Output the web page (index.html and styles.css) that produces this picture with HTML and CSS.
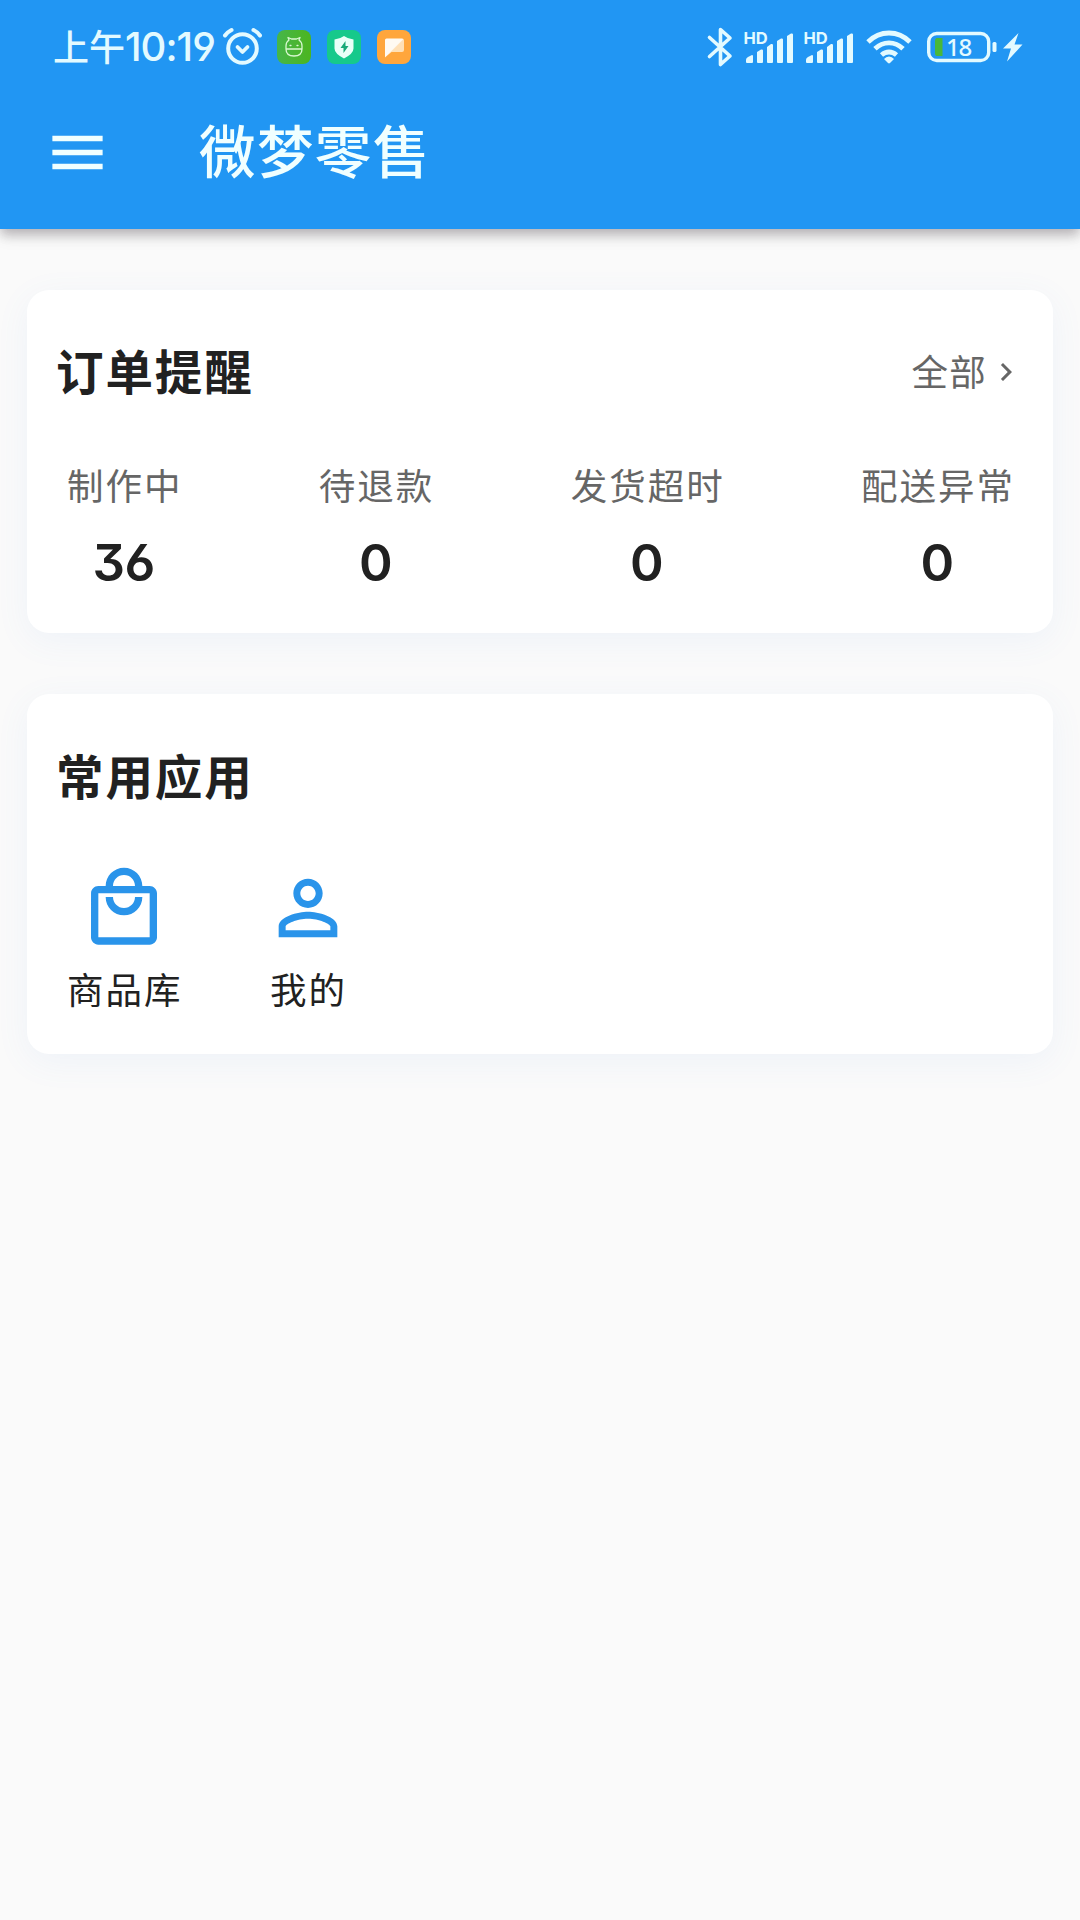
FILE: index.html
```html
<!DOCTYPE html>
<html lang="zh-CN">
<head>
<meta charset="utf-8">
<title>微梦零售</title>
<link rel="stylesheet" href="styles.css">
</head>
<body>
<header class="header">
  <div class="status">
    <div class="status-left">
      <span class="time"><span class="ampm">上午</span><span class="clock">10:19</span></span>
      <svg class="alarm" width="42" height="40" viewBox="0 0 42 40" fill="none" stroke="#e3faff" stroke-linecap="round" stroke-linejoin="round">
        <circle cx="20.500" cy="21.500" r="14.300" stroke-width="4"/>
        <path d="M15.500 20l5 5 5-5" stroke-width="3.800"/>
        <path d="M3 8.500Q5.500 5 9.500 3M31.500 3Q35.500 5 38 8.500" stroke-width="4"/>
      </svg>
      <svg class="app" width="34" height="34" viewBox="0 0 34 34">
        <defs><linearGradient id="green"><stop stop-color="#46b64a"/><stop offset="1" stop-color="#4cb51f"/></linearGradient></defs>
        <rect width="34" height="34" rx="8" fill="url(#green)"/>
        <path d="M9 19V16q0-4 3-6L11 7.500l3.500 1.500h5L23 7.500 22 10q3 2 3 6v3q0 7-8 7t-8-7zM9 19h16M13 15.500h1M20 15.500h1" fill="none" stroke="#d8f8d0" stroke-width="1.300" stroke-linecap="round" stroke-linejoin="round"/>
      </svg>
      <svg class="app" width="34" height="34" viewBox="0 0 34 34">
        <rect width="34" height="34" rx="8" fill="#16c98b"/>
        <path d="M17 6q4 3 9.500 3.500v9q0 5-9.500 10-9.500-5-9.500-10v-9Q13 9 17 6z" fill="#e9fff8"/>
        <path d="M18.500 11l-5 7h3v5l5-7h-3z" fill="#16a978"/>
      </svg>
      <svg class="app" width="34" height="34" viewBox="0 0 34 34">
        <defs><linearGradient id="note" x2="1" y2="1"><stop offset=".48" stop-color="#fffaf2"/><stop offset=".52" stop-color="#ffe0b6"/></linearGradient></defs>
        <rect width="34" height="34" rx="8" fill="#ffa63c"/>
        <path d="M9.500 8.500H25q2 0 2 2V20q0 2-2 2H14.500L8 27.500V10q0-1.500 1.500-1.500z" fill="url(#note)"/>
      </svg>
    </div>
    <div class="status-right">
      <svg class="bluetooth" width="26" height="40" viewBox="0 0 26 40" fill="none" stroke="#e3faff" stroke-width="3.600" stroke-linecap="round" stroke-linejoin="round">
        <path d="M2.500 10.500L23 29l-9.500 8.500v-35L23 11 2.500 29.500"/>
      </svg>
      <svg class="signal" width="52" height="36" viewBox="0 0 52 36" fill="#e3faff">
        <text class="hd" x="-.5" y="14.500">HD</text>
        <path d="M2 33v-2q0-2 2-3l4-2q1 0 1 1v6q0 1-1 1H3q-1 0-1-1zM13 33V23l4-2.500q2-.5 2 1V33q0 1-1 1h-4q-1 0-1-1zM23 33V18l4-3q2-.5 2 1v17q0 1-1 1h-4q-1 0-1-1zM33 33V12l4-2.500q2-.5 2 1V33q0 1-1 1h-4q-1 0-1-1zM43 33V7l4-2.500q2-.5 2 1V33q0 1-1 1h-4q-1 0-1-1z"/>
      </svg>
      <svg class="signal" width="52" height="36" viewBox="0 0 52 36" fill="#e3faff">
        <text class="hd" x="-.5" y="14.500">HD</text>
        <path d="M2 33v-2q0-2 2-3l4-2q1 0 1 1v6q0 1-1 1H3q-1 0-1-1zM13 33V23l4-2.500q2-.5 2 1V33q0 1-1 1h-4q-1 0-1-1zM23 33V18l4-3q2-.5 2 1v17q0 1-1 1h-4q-1 0-1-1zM33 33V12l4-2.500q2-.5 2 1V33q0 1-1 1h-4q-1 0-1-1zM43 33V7l4-2.500q2-.5 2 1V33q0 1-1 1h-4q-1 0-1-1z"/>
      </svg>
      <svg class="wifi" width="46" height="34" viewBox="0 0 46 34" fill="none" stroke="#e3faff" stroke-width="4.800">
        <path d="M2 12Q11 3 23 3t21 9M9 18.800q6-6 14-6t14 6M15.500 25q3.500-3 7.500-3t7.500 3"/>
        <path d="M18 29q2-2.500 5-2.500t5 2.500l-4 4q-1 .8-2 0z" fill="#e3faff" stroke="none"/>
      </svg>
      <svg class="battery" width="70" height="32" viewBox="0 0 70 32">
        <rect x="1.700" y="2.500" width="60" height="27" rx="8" fill="none" stroke="#e3faff" stroke-width="3.400"/>
        <path d="M10 7h5.500v18H10q-2 0-2-3V10q0-3 2-3z" fill="#49b839"/>
        <rect x="65.500" y="11" width="4" height="10" rx="1.500" fill="#e3faff"/>
        <text class="level" x="19" y="24.500">18</text>
      </svg>
      <svg class="bolt" width="20" height="30" viewBox="0 0 20 30"><path d="M15.500 1L0 16.500h8L4 29.500 19.500 12.500h-8z" fill="#e3faff"/></svg>
    </div>
  </div>
  <div class="toolbar">
    <svg class="menu" width="67" height="67" viewBox="0 0 24 24" fill="#f0ffff"><path d="M3 18h18v-2H3v2zm0-5h18v-2H3v2zm0-7v2h18V6H3z"/></svg>
    <h1 class="title">微梦零售</h1>
  </div>
</header>
<main class="content">
  <section class="card orders">
    <div class="card-head">
      <h2 class="card-title">订单提醒</h2>
      <a class="more"><span>全部</span><svg width="36" height="36" viewBox="0 0 24 24" fill="#666"><path d="M10 6L8.590 7.410 13.170 12l-4.580 4.590L10 18l6-6z"/></svg></a>
    </div>
    <div class="stats">
      <div class="stat"><span class="label">制作中</span><span class="number">36</span></div>
      <div class="stat"><span class="label">待退款</span><span class="number">0</span></div>
      <div class="stat"><span class="label">发货超时</span><span class="number">0</span></div>
      <div class="stat"><span class="label">配送异常</span><span class="number">0</span></div>
    </div>
  </section>
  <section class="card apps">
    <div class="card-head"><h2 class="card-title">常用应用</h2></div>
    <div class="shortcuts">
      <div class="shortcut">
        <svg class="bag" width="88" height="88" viewBox="0 0 24 24" fill="#2a94ea"><path d="M19 6h-2c0-2.760-2.240-5-5-5S7 3.240 7 6H5c-1.100 0-1.990.9-1.990 2L3 20c0 1.100.9 2 2 2h14c1.100 0 2-.9 2-2V8c0-1.100-.9-2-2-2zm-7-3c1.660 0 3 1.340 3 3H9c0-1.660 1.340-3 3-3zm7 17H5V8h14v12zm-7-8c-1.660 0-3-1.340-3-3H7c0 2.760 2.240 5 5 5s5-2.240 5-5h-2c0 1.660-1.340 3-3 3z"/></svg>
        <span class="label dark">商品库</span>
      </div>
      <div class="shortcut">
        <svg width="88" height="88" viewBox="0 0 24 24" fill="#2a94ea"><path d="M12 5.900c1.160 0 2.100.94 2.100 2.100s-.94 2.100-2.100 2.100S9.900 9.160 9.900 8s.94-2.100 2.100-2.100m0 9c2.970 0 6.100 1.460 6.100 2.100v1.100H5.900V17c0-.64 3.130-2.100 6.100-2.100M12 4C9.790 4 8 5.790 8 8s1.790 4 4 4 4-1.790 4-4-1.790-4-4-4zm0 9c-2.670 0-8 1.340-8 4v3h16v-3c0-2.660-5.330-4-8-4z"/></svg>
        <span class="label dark mine">我的</span>
      </div>
    </div>
  </section>
</main>
</body>
</html>
```
FILE: styles.css
```css
* { box-sizing: border-box; }
body {
  margin: 0;
  min-height: 1920px;
  background: #fafafa;
  color: #212121;
  font-family: "Noto Sans CJK SC", sans-serif;
}
svg { display: block; flex: none; overflow: visible; }
h1, h2 { margin: 0; }
.header {
  height: 229px;
  background: #2196f3;
  box-shadow: 0 6px 10px -1px rgba(20, 0, 20, .2), 0 9px 14px rgba(0, 0, 0, .08), 0 2px 20px rgba(0, 0, 0, .06);
}
.status {
  height: 94px;
  padding: 0 57px 0 53px;
  display: flex;
  align-items: center;
  justify-content: space-between;
}
.status-left, .status-right { display: flex; align-items: center; }
.time { display: flex; align-items: center; width: 169px; color: #e3faff; line-height: 50px; white-space: nowrap; }
.ampm { font-size: 36px; font-weight: 500; width: 72px; padding-bottom: 4px; }
.clock { font-family: Inter, sans-serif; font-size: 40px; font-weight: 500; letter-spacing: -1px; font-feature-settings: "cv04"; }
.alarm { margin-right: 13px; }
.app + .app { margin-left: 16px; }
.bluetooth { margin-right: 11px; }
.signal { margin-right: 8px; }
.hd { font: 700 16.500px Inter, sans-serif; }
.wifi { margin: 0 15px 0 2px; }
.battery { margin-right: 6px; }
.level { font: 500 24px "Noto Sans", sans-serif; letter-spacing: -1.200px; fill: #e3faff; }
.toolbar { height: 117px; padding-left: 43.500px; display: flex; align-items: center; }
.title { margin-left: 88.500px; padding-bottom: 9px; color: #f0ffff; font-size: 56.500px; font-weight: 500; letter-spacing: 1.400px; line-height: 80px; }
.content { padding: 61px 27px; display: flex; flex-direction: column; gap: 61px; }
.card {
  background: #fff;
  border-radius: 22px;
  box-shadow: 0 8px 34px rgba(90, 140, 220, .07);
}
.orders { height: 343px; }
.apps { height: 360px; }
.card-head { height: 164px; padding: 0 29px; display: flex; align-items: center; justify-content: space-between; }
.card-title { padding-bottom: 4px; font-size: 47.500px; font-weight: 700; letter-spacing: 1.900px; line-height: 64px; }
.apps .card-title { padding-bottom: 2px; }
.more { display: flex; align-items: center; color: #666; font-size: 36.500px; letter-spacing: 1.300px; }
.more span { margin-right: 1px; padding-bottom: 4px; }
.label { font-size: 36.500px; line-height: 50px; letter-spacing: 2px; color: #666; }
.label.dark { color: #212121; }
.stats { padding: 6px 38px 0 40px; display: flex; justify-content: space-between; }
.stat, .shortcut { display: flex; flex-direction: column; align-items: center; }
.number { margin-top: 22px; padding-right: 2px; font-family: Inter, sans-serif; font-size: 51px; font-weight: 600; line-height: 62px; letter-spacing: -.5px; font-feature-settings: "cv03", "cv09"; }
.shortcuts { padding: 6px 40px 0; display: flex; gap: 81px; }
.shortcut .label { margin-top: 12px; }
.bag { margin-right: 2px; }
.mine { padding-left: 2px; }
```
